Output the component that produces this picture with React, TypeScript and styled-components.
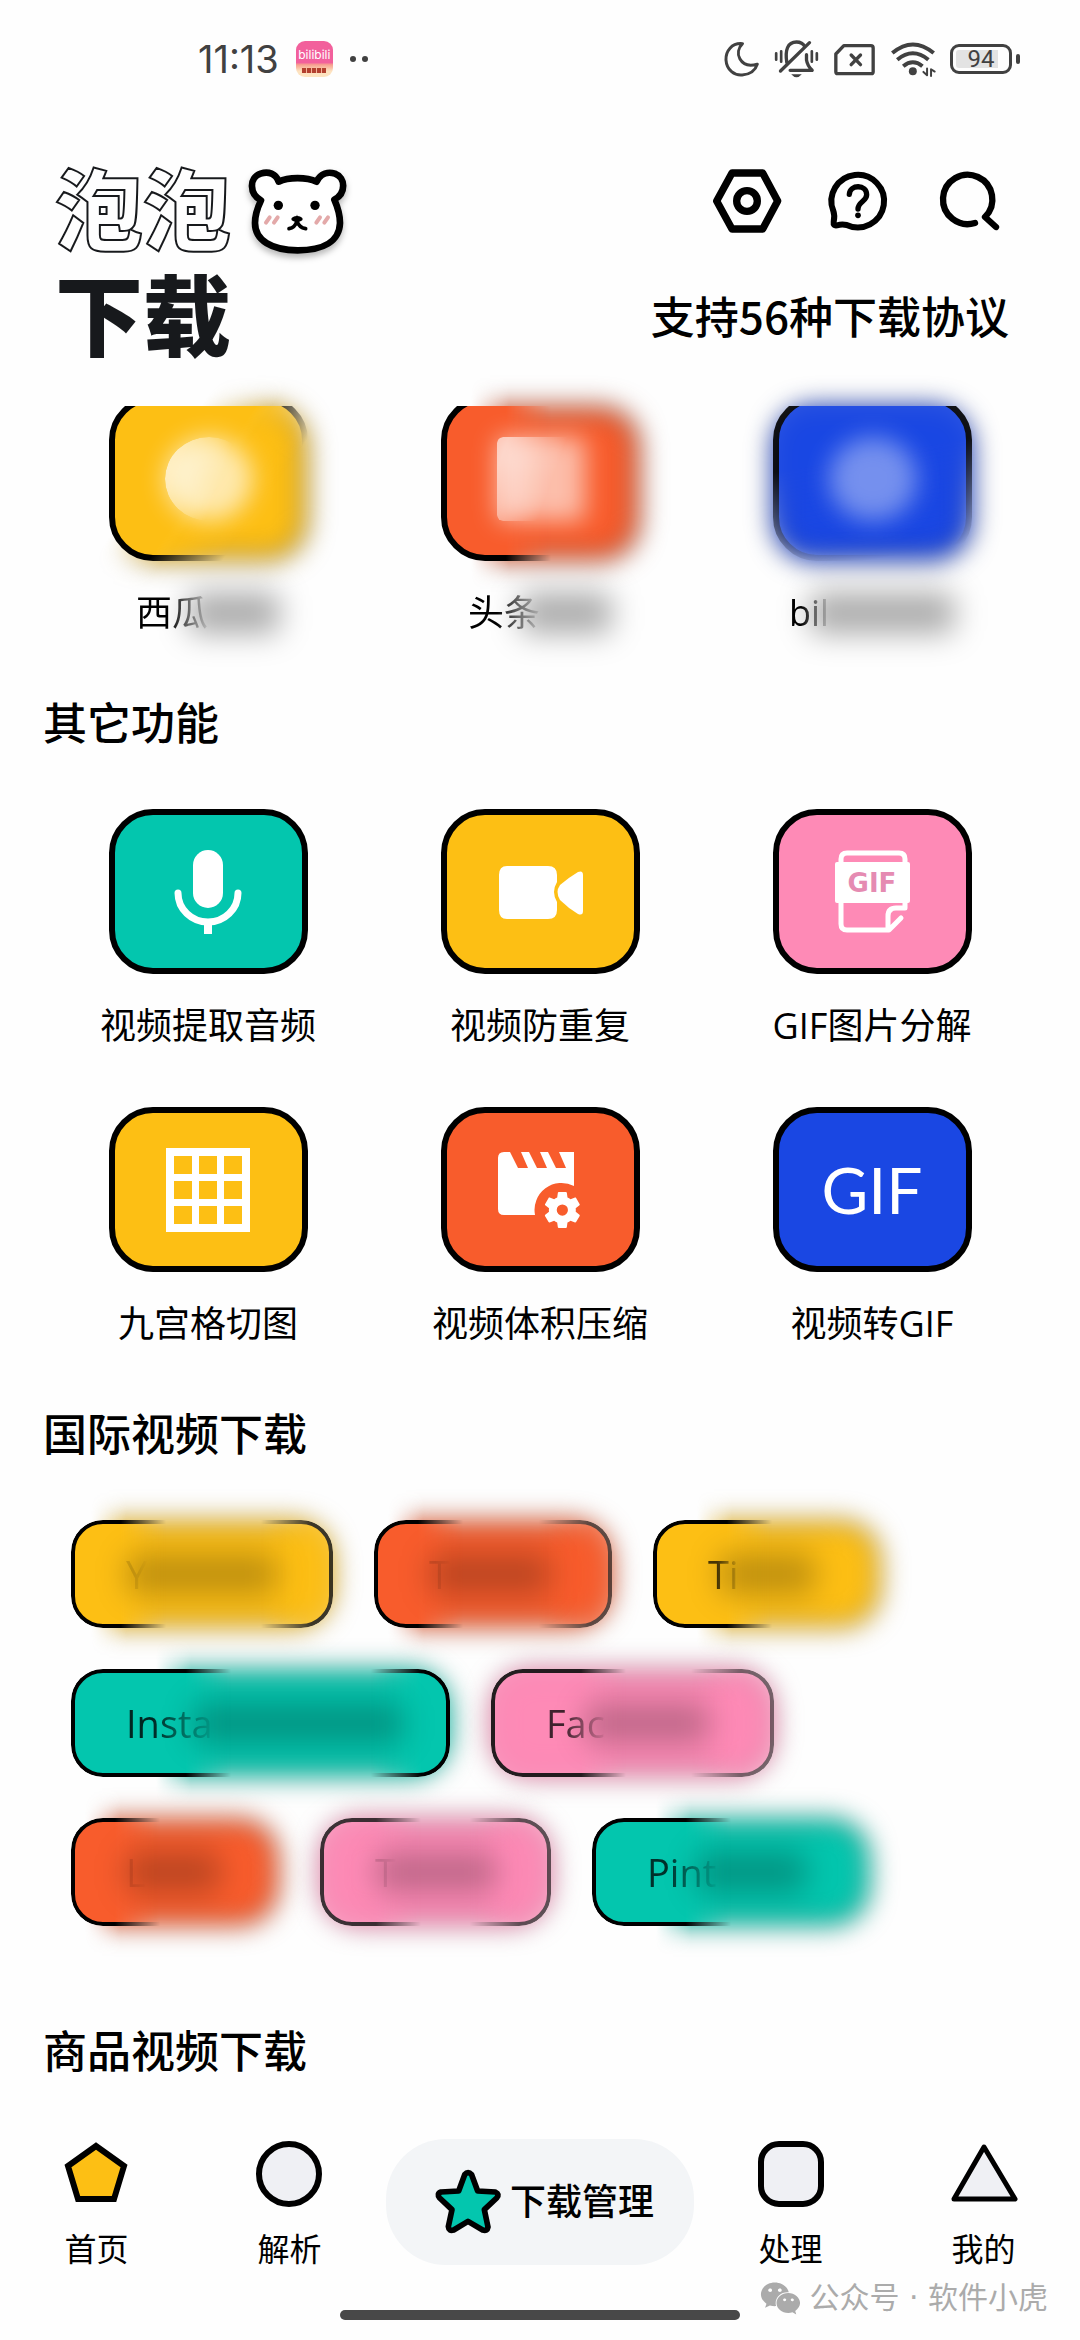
import React from "react";
import styled, { createGlobalStyle } from "styled-components";
import { FaWeixin } from "react-icons/fa";

const GlobalStyle = createGlobalStyle`
  *, *::before, *::after { box-sizing: border-box; }
  body { margin: 0; background: #fefefe; }
  button { font: inherit; color: inherit; border: 0; padding: 0; background: none; cursor: pointer; }
  a { color: inherit; text-decoration: none; }
  svg { display: block; flex: none; overflow: visible; }
`;

const tone = {
  yellow: "#fdbf14",
  orange: "#f85c2c",
  blue: "#1a47e3",
  teal: "#03c6ae",
  pink: "#fe8ab6",
};
type Tone = keyof typeof tone;

const Page = styled.div`
  display: flex;
  flex-direction: column;
  min-height: 100vh;
  overflow-x: hidden;
  color: #000;
  font-family: "Open Sans", "Noto Sans CJK SC", sans-serif;
`;

/* ---------- status bar ---------- */

const StatusBar = styled.div`
  display: flex;
  align-items: center;
  justify-content: space-between;
  height: 118px;
  padding: 0 60px 0 198px;
  color: #414141;
`;
const StatusGroup = styled.div<{ $gap: number }>`
  display: flex;
  align-items: center;
  gap: ${(p) => p.$gap}px;
`;
const Clock = styled.span`
  font: 400 38px/44px Inter, sans-serif;
`;
const AppBadge = styled.span`
  display: flex;
  flex-direction: column;
  align-items: center;
  width: 37px;
  height: 36px;
  padding-top: 4px;
  border-radius: 9px;
  background: linear-gradient(#f2609c 0 60%, #f7a08f 66%, #fde3c0 84%);
  color: #fff;
  font: 400 12px/20px Inter, sans-serif;
`;
const BadgeStrip = styled.span`
  width: 24px;
  height: 5px;
  margin-top: 3px;
  background: repeating-linear-gradient(90deg, #b3402f 0 4px, #f3b59a 4px 5px);
`;
const Dots = styled.span`
  display: flex;
  gap: 6px;
  &::before, &::after {
    content: "";
    width: 6px;
    height: 6px;
    border-radius: 50%;
    background: currentColor;
  }
`;
const Battery = styled.span`
  display: flex;
  align-items: center;
  gap: 4px;
  &::after {
    content: "";
    width: 4px;
    height: 10px;
    border-radius: 2px;
    background: currentColor;
  }
`;
const BatteryCell = styled.span`
  width: 62px;
  height: 30px;
  padding: 3px;
  border: 3px solid currentColor;
  border-radius: 9px;
  background: linear-gradient(90deg, #e3e3e3 0 85%, transparent 85%) content-box;
  text-align: center;
  font: 400 24px/18px Roboto, sans-serif;
`;

/* ---------- header ---------- */

const Header = styled.header`
  display: flex;
  justify-content: space-between;
  padding: 34px 71px 34px 55px;
`;
const Title = styled.h1`
  margin: 0;
  padding-top: 8px;
  font-family: "Liberation Sans", "Noto Sans CJK SC", sans-serif;
  font-size: 88px;
  font-weight: 900;
  line-height: 106px;
  color: #17191c;
`;
const TitleLine = styled.span`
  display: flex;
  align-items: center;
  gap: 14px;
`;
const Outlined = styled.span`
  color: #fefefe;
  -webkit-text-stroke: 2px #17191c;
`;
const HeaderSide = styled.div`
  display: flex;
  flex-direction: column;
  align-items: flex-end;
  padding-top: 2px;
`;
const Actions = styled.div`
  display: flex;
  align-items: center;
  gap: 31px;
  height: 94px;
`;
const Support = styled.p`
  margin: 35px 0 0;
  font-family: "Noto Sans CJK SC", sans-serif;
  font-size: 44px;
  font-weight: 500;
  line-height: 64px;
`;

/* ---------- sections ---------- */

const SectionTitle = styled.h2`
  margin: 52px 43px 54px;
  font-size: 44px;
  font-weight: 500;
  line-height: 64px;
`;
const TileGrid = styled.div`
  display: grid;
  grid-template-columns: repeat(3, 1fr);
  row-gap: 55px;
  padding: 0 42px;
`;
const TileButton = styled.button`
  display: flex;
  flex-direction: column;
  align-items: center;
  gap: 26px;
`;
const TileFace = styled.span<{ $tone: Tone }>`
  display: grid;
  place-items: center;
  width: 199px;
  height: 165px;
  border: 6px solid #000;
  border-radius: 44px;
  background: ${(p) => tone[p.$tone]};
  color: #fff;
`;
const TileLabel = styled.span`
  display: flex;
  font-size: 36px;
  line-height: 52px;
  white-space: nowrap;
`;
const GifWord = styled.span`
  font: 400 64px/76px Lato, sans-serif;
`;

/* ---------- hazy, partly hidden entries ---------- */

const Scrolled = styled.span`
  position: relative;
  display: block;
  width: 199px;
  height: 155px;
`;
const Clip = styled.span<{ $mask: string }>`
  position: relative;
  display: flex;
  align-items: flex-end;
  height: 155px;
  overflow: hidden;
  mask-image: ${(p) => p.$mask};
`;
const HazeField = styled.span<{ $mask: string }>`
  position: absolute;
  inset: -40px;
  padding: 40px;
  pointer-events: none;
  mask-image: ${(p) => p.$mask};
`;
const HazeShape = styled.span<{ $tone: Tone; $edge: number }>`
  display: block;
  height: 100%;
  border: ${(p) => p.$edge}px solid rgba(0, 0, 0, 0.6);
  border-radius: 40px;
  background: ${(p) => tone[p.$tone]};
  filter: blur(13px);
`;
const Glow = styled.span<{ $round: boolean; $alpha: number }>`
  position: absolute;
  left: 56px;
  top: 31px;
  width: 88px;
  height: 84px;
  border-radius: ${(p) => (p.$round ? "50%" : "6px")};
  background: rgba(255, 255, 255, ${(p) => p.$alpha});
  filter: blur(12px);
`;
const SharpGlow = styled(Glow)`
  filter: none;
  mask-image: linear-gradient(110deg, #000 10%, transparent 60%);
`;
const Fading = styled.span<{ $from: number; $to: number; $alpha: number }>`
  position: relative;
  opacity: ${(p) => p.$alpha};
  mask-image: linear-gradient(90deg, #000 ${(p) => p.$from}%, transparent ${(p) => p.$to}%);
`;
const Smudge = styled.span<{ $width: number; $alpha: number }>`
  align-self: center;
  flex: none;
  width: ${(p) => p.$width}px;
  height: 42px;
  margin-left: -20px;
  border-radius: 10px;
  background: rgba(0, 0, 0, ${(p) => p.$alpha});
  filter: blur(15px);
`;

const ChipRow = styled.div`
  display: flex;
  flex-wrap: wrap;
  gap: 41px;
  padding: 0 71px 41px;
`;
const ChipButton = styled.button<{ $width: number }>`
  position: relative;
  display: flex;
  align-items: center;
  width: ${(p) => p.$width}px;
  height: 108px;
  padding: 0 55px;
  font-size: 38px;
  line-height: 56px;
`;
const ChipFace = styled.span<{ $tone: Tone; $mask: string }>`
  position: absolute;
  inset: 0;
  border: 4px solid #000;
  border-radius: 32px;
  background: ${(p) => tone[p.$tone]};
  mask-image: ${(p) => p.$mask};
`;

/* ---------- bottom bar ---------- */

const BottomBar = styled.footer`
  position: relative;
  display: flex;
  flex-direction: column;
  align-items: center;
  margin-top: auto;
  padding-bottom: 20px;
`;
const Nav = styled.nav`
  display: flex;
  align-items: flex-start;
  align-self: stretch;
`;
const NavLink = styled.a`
  display: flex;
  flex: 1;
  flex-direction: column;
  align-items: center;
  gap: 20px;
  padding-top: 2px;
  font-size: 32px;
  line-height: 44px;
`;
const Manage = styled.button`
  display: flex;
  align-items: center;
  justify-content: flex-end;
  gap: 8px;
  width: 308px;
  height: 126px;
  padding-right: 40px;
  border-radius: 60px;
  background: #f3f5f7;
  font-size: 36px;
  font-weight: 500;
  line-height: 52px;
`;
const HomeBar = styled.div`
  width: 400px;
  height: 10px;
  margin-top: 39px;
  border-radius: 5px;
  background: #484848;
`;
const Watermark = styled.p`
  position: absolute;
  right: 32px;
  bottom: 20px;
  display: flex;
  align-items: center;
  gap: 8px;
  margin: 0;
  color: #ababab;
  font-family: "DejaVu Sans", "Noto Sans CJK SC", sans-serif;
  font-size: 30px;
  line-height: 44px;
  white-space: pre;
`;

/* ---------- icons ---------- */

const line = { fill: "none", stroke: "currentColor", strokeLinecap: "round", strokeLinejoin: "round" } as const;

const Moon = () => (
  <svg width="37" height="37" viewBox="124 61 112 112" {...line} strokeWidth="9">
    <path d="M183 69C150 66 132 92 133 118C135 150 160 166 182 164C205 162 222 150 228 131C205 138 185 133 175 115C167 100 170 82 183 69Z" />
  </svg>
);
const BellOff = () => (
  <svg width="47" height="40" viewBox="275 59 140 120" {...line} strokeWidth="10">
    <path d="M316 130C310 92 318 68 345 68C358 68 366 74 370 82M375 106V122Q378 140 392 153H326M297 155L384 70" />
    <path d="M284 102V121M299 96V127M391 96V127M406 102V121" strokeWidth="8" />
    <path d="M329 165h32q-16 18-32 0Z" fill="currentColor" stroke="none" />
  </svg>
);
const SimOff = () => (
  <svg width="43" height="40" viewBox="455 59 128 120" {...line} strokeWidth="10">
    <path d="M487 79H568Q575 79 575 86V157Q575 163 569 163H469Q463 163 463 157V104Z" />
    <path d="M509 107l28 29M537 107l-28 29" />
  </svg>
);
const Wifi = () => (
  <svg width="48" height="40" viewBox="620 59 145 120" {...line} strokeWidth="12">
    <path d="M630 101Q692 49 755 101M645 121Q692 82 739 121M663 141Q692 117 721 141" strokeLinecap="butt" />
    <circle cx="692" cy="156" r="12" fill="currentColor" stroke="none" />
    <path d="M735 148V168L724 158M747 170V150L758 157" strokeWidth="6" />
  </svg>
);
const Bear = () => (
  <svg width="105" height="106" viewBox="615 61 315 318">
    <path
      d="M716 126C745 112 800 112 830 126C842 100 866 96 885 102C917 114 919 160 883 180C894 205 900 225 900 250C898 305 850 332 773 332C695 332 645 302 645 250C645 225 652 205 663 182C628 163 626 114 662 102C685 94 708 102 716 126Z"
      fill="#fff" stroke="#000" strokeWidth="20" strokeLinejoin="round"
      style={{ filter: "drop-shadow(0 12px 9px rgba(0,0,0,.28))" }}
    />
    <circle cx="715" cy="197" r="14" />
    <circle cx="825" cy="197" r="14" />
    <path d="M678 249l11-16M702 249l11-16M829 249l11-16M853 249l11-16" stroke="#e3a9a9" strokeWidth="12" strokeLinecap="round" />
    <ellipse cx="771" cy="238" rx="17" ry="9" />
    <path d="M747 267Q765 264 771 244Q777 264 797 267" fill="none" stroke="#000" strokeWidth="11" strokeLinecap="round" />
  </svg>
);
const Settings = () => (
  <svg width="80" height="80" viewBox="79 425 240 240" {...line} strokeWidth="22">
    <path d="M108 545L154 461H246L291 545L246 629H154Z" />
    <circle cx="199" cy="545" r="31" />
  </svg>
);
const Help = () => (
  <svg width="80" height="80" viewBox="413 425 240 240" {...line} strokeWidth="18">
    <path d="M499 617A79 79 0 1 0 459 575Q464 588 460 608Q458 620 470 618Q484 614 499 617Z" />
    <path d="M507 525C509 494 559 495 559 526C559 546 533 547 533 569" strokeWidth="16" />
    <circle cx="533" cy="588" r="8.5" fill="currentColor" stroke="none" />
  </svg>
);
const Search = () => (
  <svg width="80" height="80" viewBox="744 425 240 240" {...line} strokeWidth="19">
    <path d="M882 611A74 74 0 1 1 912 593L945 623" />
  </svg>
);

const Mic = () => (
  <svg width="90" height="90" viewBox="-45 -45 90 90">
    <rect x="-15" y="-42" width="30" height="58" rx="15" fill="#fff" />
    <path d="M-30 1A30 29 0 0 0 30 1" fill="none" stroke="#fff" strokeWidth="7" strokeLinecap="round" />
    <path d="M-4 30h8v12h-8Z" fill="#fff" />
  </svg>
);
const Camera = () => (
  <svg width="90" height="90" viewBox="-45 -45 90 90" fill="#fff">
    <path d="M-33 -26H8Q17 -26 17 -17V-10Q11 0 17 10V18Q17 27 8 27H-33Q-41 27 -41 18V-17Q-41 -26 -33 -26Z" />
    <path d="M20 -7Q28 -14 38 -20Q43 -22 43 -17V19Q43 24 38 22Q28 16 20 8Q15 0 20 -7Z" />
  </svg>
);
const GifPage = () => (
  <svg width="90" height="90" viewBox="-45 -45 90 90">
    <path d="M-31 -28V-33Q-31 -39 -25 -39H27Q33 -39 33 -33V-28M-31 10V32Q-31 38 -25 38H17L29 26M33 10V16H24Q16 16 16 24V37" fill="none" stroke="#fff" strokeWidth="5" strokeLinecap="round" strokeLinejoin="round" />
    <rect x="-37" y="-30" width="75" height="41" rx="2" fill="#fff" />
    <text x="0" y="0" textAnchor="middle" fill="#e58bb2" fontFamily="'DejaVu Sans', sans-serif" fontWeight="700" fontSize="26">GIF</text>
  </svg>
);
const NineGrid = () => (
  <svg width="90" height="90" viewBox="-45 -45 90 90">
    <path
      fill="#fff" fillRule="evenodd"
      d="M-42 -42H42V42H-42ZM-34 -34v18h18v-18ZM-9 -34v18h18v-18ZM16 -34v18h18v-18ZM-34 -9v18h18v-18ZM-9 -9v18h18v-18ZM16 -9v18h18v-18ZM-34 16v18h18v-18ZM-9 16v18h18v-18ZM16 16v18h18v-18Z"
    />
  </svg>
);
const Compress = () => (
  <svg width="90" height="90" viewBox="-45 -45 90 90" fill="#fff">
    <path d="M-36 -38H-30L-22 -22H-12L-19 -38H-11L-3 -22H7L0 -38H8L16 -22H26L19 -38H34V-4A27 27 0 0 0 -5 25H-36Q-42 25 -42 19V-32Q-42 -38 -36 -38Z" />
    <path
      transform="translate(-0.100 -2.400) scale(1.870)"
      d="M19.140 12.940c.04-.3.06-.61.06-.94 0-.32-.02-.64-.07-.94l2.030-1.580c.18-.14.23-.41.12-.61l-1.920-3.320c-.12-.22-.37-.29-.59-.22l-2.390.96c-.5-.38-1.030-.7-1.620-.94l-.36-2.540c-.04-.24-.24-.41-.48-.41h-3.840c-.24 0-.43.17-.47.41l-.36 2.540c-.59.24-1.130.57-1.620.94l-2.390-.96c-.22-.08-.47 0-.59.22L2.740 8.870c-.12.21-.08.47.12.61l2.030 1.580c-.05.3-.09.63-.09.94s.02.64.07.94l-2.030 1.580c-.18.14-.23.41-.12.61l1.920 3.320c.12.22.37.29.59.22l2.390-.96c.5.38 1.030.7 1.620.94l.36 2.540c.05.24.24.41.48.41h3.840c.24 0 .44-.17.47-.41l.36-2.540c.59-.24 1.130-.56 1.620-.94l2.390.96c.22.08.47 0 .59-.22l1.920-3.320c.12-.22.07-.47-.12-.61l-2.010-1.580zM12 15a3 3 0 1 1 0-6 3 3 0 0 1 0 6z"
    />
  </svg>
);

const shape = { width: 68, height: 66, viewBox: "0 0 68 66", stroke: "#000", strokeWidth: 6, strokeLinejoin: "round" } as const;
const Pentagon = () => (
  <svg {...shape} strokeLinejoin="miter">
    <path d="M33 5L61 25L51 58H15L5 25Z" fill={tone.yellow} />
  </svg>
);
const Circle = () => (
  <svg {...shape}><circle cx="33" cy="33" r="30" fill="#eff0f4" /></svg>
);
const Rounded = () => (
  <svg {...shape}><rect x="4" y="3" width="60" height="60" rx="18" fill="#eff0f4" /></svg>
);
const Triangle = () => (
  <svg {...shape}><path d="M34 6L65 58H4Z" fill="#eff0f4" strokeWidth="5" /></svg>
);
const Star = () => (
  <svg width="68" height="68" viewBox="160 138 204 204" fill={tone.teal} stroke="#000" strokeWidth="17" strokeLinejoin="round">
    <path d="M252 158Q262 146 273 158L291 207L344 210Q358 216 348 228L311 263L322 315Q320 328 306 324L262 298L219 324Q204 328 203 314L214 263L177 228Q167 215 181 210L234 207Z" />
  </svg>
);

/* ---------- data ---------- */

const hazeOnly = "linear-gradient(#000, #000)";

const hidden = [
  {
    text: "西瓜", tone: "yellow" as Tone, round: true, glow: 0.65, smudge: 92, from: 45, to: 105,
    face: "linear-gradient(125deg, #000 48%, transparent 72%)",
    haze: "linear-gradient(125deg, transparent 36%, #000 52%)",
  },
  {
    text: "头条", tone: "orange" as Tone, round: false, glow: 0.6, smudge: 92, from: 40, to: 105,
    face: "linear-gradient(90deg, #000 65px, transparent 110px)",
    haze: "linear-gradient(90deg, transparent 70px, #000 108px)",
  },
  {
    text: "bil", tone: "blue" as Tone, round: true, glow: 0.4, smudge: 146, from: 30, to: 105,
    face: "linear-gradient(170deg, rgba(0,0,0,.9) 35%, transparent 90%)",
    haze: hazeOnly,
  },
];

const tools = [
  { text: "视频提取音频", tone: "teal" as Tone, icon: <Mic /> },
  { text: "视频防重复", tone: "yellow" as Tone, icon: <Camera /> },
  { text: "GIF图片分解", tone: "pink" as Tone, icon: <GifPage /> },
  { text: "九宫格切图", tone: "yellow" as Tone, icon: <NineGrid /> },
  { text: "视频体积压缩", tone: "orange" as Tone, icon: <Compress /> },
  { text: "视频转GIF", tone: "blue" as Tone, icon: <GifWord>GIF</GifWord> },
];

/* lead/end: opacity of the crisp face at each side; out: where it dissolves; back: where it returns */
const chips = [
  { text: "Y", tone: "yellow" as Tone, width: 262, lead: 1, out: 50, back: 190, end: 0.75, ink: 0.12, smudge: 150 },
  { text: "T", tone: "orange" as Tone, width: 238, lead: 1, out: 44, back: 165, end: 0.6, ink: 0.12, smudge: 120 },
  { text: "Ti", tone: "yellow" as Tone, width: 228, lead: 1, out: 74, back: 228, end: 0, ink: 0.7, smudge: 96 },
  { text: "Insta", tone: "teal" as Tone, width: 379, lead: 1, out: 115, back: 300, end: 1, ink: 0.8, smudge: 210 },
  { text: "Fac", tone: "pink" as Tone, width: 283, lead: 0.85, out: 90, back: 200, end: 0.5, ink: 0.75, smudge: 124 },
  { text: "L", tone: "orange" as Tone, width: 208, lead: 1, out: 44, back: 208, end: 0, ink: 0.1, smudge: 94 },
  { text: "T", tone: "pink" as Tone, width: 231, lead: 0.75, out: 56, back: 150, end: 0.6, ink: 0.12, smudge: 120 },
  { text: "Pint", tone: "teal" as Tone, width: 278, lead: 1, out: 94, back: 278, end: 0, ink: 0.75, smudge: 110 },
];
type Chip = (typeof chips)[number];

/* the haze field starts 40px left of the chip, so its stops are 40px further along */
const hazeMask = (c: Chip) =>
  c.lead < 1 ? hazeOnly : `linear-gradient(90deg, transparent ${c.out + 10}px, #000 ${c.out + 45}px)`;
const faceMask = (c: Chip) =>
  `linear-gradient(90deg, rgba(0,0,0,${c.lead}) ${c.out}px, transparent ${c.out + 45}px, transparent ${c.back}px, rgba(0,0,0,${c.end}) ${c.back + 50}px)`;

export default function App() {
  return (
    <Page>
      <GlobalStyle />
      <StatusBar>
        <StatusGroup $gap={17}>
          <Clock>11:13</Clock>
          <AppBadge>bilibili<BadgeStrip /></AppBadge>
          <Dots />
        </StatusGroup>
        <StatusGroup $gap={13}>
          <Moon />
          <BellOff />
          <SimOff />
          <Wifi />
          <Battery><BatteryCell>94</BatteryCell></Battery>
        </StatusGroup>
      </StatusBar>

      <Header>
        <Title>
          <TitleLine><Outlined>泡泡</Outlined><Bear /></TitleLine>
          <TitleLine>下载</TitleLine>
        </Title>
        <HeaderSide>
          <Actions>
            <button aria-label="设置"><Settings /></button>
            <button aria-label="帮助"><Help /></button>
            <button aria-label="搜索"><Search /></button>
          </Actions>
          <Support>支持56种下载协议</Support>
        </HeaderSide>
      </Header>

      <main>
        <TileGrid>
          {hidden.map((item) => (
            <TileButton key={item.text}>
              <Scrolled>
                <HazeField $mask={item.haze}><HazeShape $tone={item.tone} $edge={6} /></HazeField>
                <Clip $mask={item.face}><TileFace $tone={item.tone} /></Clip>
                <Glow $round={item.round} $alpha={item.glow} />
                {item.tone !== "blue" && <SharpGlow $round={item.round} $alpha={item.glow} />}
              </Scrolled>
              <TileLabel>
                <Fading $from={item.from} $to={item.to} $alpha={1}>{item.text}</Fading>
                <Smudge $width={item.smudge} $alpha={0.32} />
              </TileLabel>
            </TileButton>
          ))}
        </TileGrid>

        <SectionTitle>其它功能</SectionTitle>
        <TileGrid>
          {tools.map((item) => (
            <TileButton key={item.text}>
              <TileFace $tone={item.tone}>{item.icon}</TileFace>
              <TileLabel>{item.text}</TileLabel>
            </TileButton>
          ))}
        </TileGrid>

        <SectionTitle>国际视频下载</SectionTitle>
        <ChipRow>
          {chips.map((c, i) => (
            <ChipButton key={i} $width={c.width}>
              <HazeField $mask={hazeMask(c)}><HazeShape $tone={c.tone} $edge={4} /></HazeField>
              <ChipFace $tone={c.tone} $mask={faceMask(c)} />
              <Fading $from={30} $to={105} $alpha={c.ink}>{c.text}</Fading>
              <Smudge $width={c.smudge} $alpha={0.24} />
            </ChipButton>
          ))}
        </ChipRow>

        <SectionTitle>商品视频下载</SectionTitle>
      </main>

      <BottomBar>
        <Nav>
          <NavLink href="#home"><Pentagon />首页</NavLink>
          <NavLink href="#parse"><Circle />解析</NavLink>
          <Manage><Star />下载管理</Manage>
          <NavLink href="#process"><Rounded />处理</NavLink>
          <NavLink href="#mine"><Triangle />我的</NavLink>
        </Nav>
        <HomeBar />
        <Watermark><FaWeixin size={41} />公众号 · 软件小虎</Watermark>
      </BottomBar>
    </Page>
  );
}
